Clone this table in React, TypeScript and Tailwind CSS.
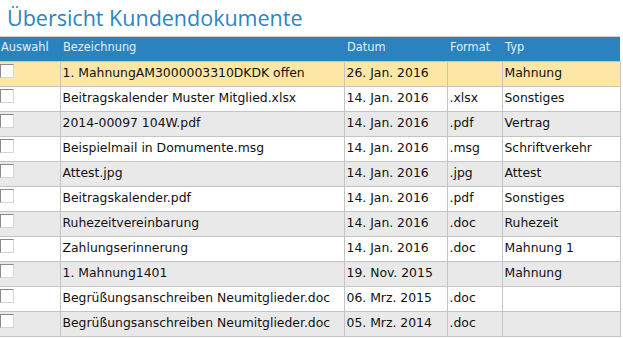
import React from "react";

const rows = [
  ["1. MahnungAM3000003310DKDK offen", "26. Jan. 2016", "", "Mahnung"],
  ["Beitragskalender Muster Mitglied.xlsx", "14. Jan. 2016", ".xlsx", "Sonstiges"],
  ["2014-00097 104W.pdf", "14. Jan. 2016", ".pdf", "Vertrag"],
  ["Beispielmail in Domumente.msg", "14. Jan. 2016", ".msg", "Schriftverkehr"],
  ["Attest.jpg", "14. Jan. 2016", ".jpg", "Attest"],
  ["Beitragskalender.pdf", "14. Jan. 2016", ".pdf", "Sonstiges"],
  ["Ruhezeitvereinbarung", "14. Jan. 2016", ".doc", "Ruhezeit"],
  ["Zahlungserinnerung", "14. Jan. 2016", ".doc", "Mahnung 1"],
  ["1. Mahnung1401", "19. Nov. 2015", "", "Mahnung"],
  ["Begrüßungsanschreiben Neumitglieder.doc", "06. Mrz. 2015", ".doc", ""],
  ["Begrüßungsanschreiben Neumitglieder.doc", "05. Mrz. 2014", ".doc", ""],
];

export default function App() {
  return (
    <div className="w-[623px] h-[338px] bg-white overflow-hidden">
      <h1
        className="text-[21.5px] leading-[26px] text-[#2d84c4] pl-[7px] pt-[5px] h-[36px]"
        style={{ fontFamily: '"Open Sans", "Noto Sans", sans-serif' }}
      >
        Übersicht Kundendokumente
      </h1>
      <table
        className="w-[620px] border-collapse table-fixed text-[12.4px] text-[#111]"
        style={{ fontFamily: '"DejaVu Sans", Verdana, sans-serif' }}
      >
        <colgroup>
          <col className="w-[60px]" />
          <col className="w-[284px]" />
          <col className="w-[103px]" />
          <col className="w-[55px]" />
          <col className="w-[118px]" />
        </colgroup>
        <thead>
          <tr className="bg-[#2b82be] text-[#e3eff9] h-[25px] border-t border-[#d0d0d0]">
            <th className="font-normal text-left align-top pt-[2px] pl-[1px] text-[11.4px]">Auswahl</th>
            <th className="font-normal text-left align-top pt-[2px] pl-[3px] text-[11.4px]">Bezeichnung</th>
            <th className="font-normal text-left align-top pt-[2px] pl-[3px] text-[11.4px]">Datum</th>
            <th className="font-normal text-left align-top pt-[2px] pl-[3px] text-[11.4px]">Format</th>
            <th className="font-normal text-left align-top pt-[2px] pl-[3px] text-[11.4px]">Typ</th>
          </tr>
        </thead>
        <tbody>
          {rows.map((r, i) => {
            const bg = i === 0 ? "bg-[#fce7a6]" : i % 2 === 1 ? "bg-white" : "bg-[#e9e9e9]";
            return (
              <tr key={i} className={`${bg} h-[25px]`}>
                <td className="border border-[#c4c4c4] border-l-0 align-top p-0 pt-[2px]">
                  <div className="w-[14px] h-[14px] bg-white border border-t-[#8a8a8a] border-l-[#8a8a8a] border-r-[#d6d6d6] border-b-[#d6d6d6]" />
                </td>
                <td className="border border-[#c4c4c4] pl-[2px] pt-[2px] align-top whitespace-nowrap overflow-hidden">{r[0]}</td>
                <td className="border border-[#c4c4c4] pl-[2px] pt-[2px] align-top whitespace-nowrap">{r[1]}</td>
                <td className="border border-[#c4c4c4] pl-[2px] pt-[2px] align-top whitespace-nowrap">{r[2]}</td>
                <td className="border border-[#c4c4c4] pl-[2px] pt-[2px] align-top whitespace-nowrap">{r[3]}</td>
              </tr>
            );
          })}
        </tbody>
      </table>
    </div>
  );
}
